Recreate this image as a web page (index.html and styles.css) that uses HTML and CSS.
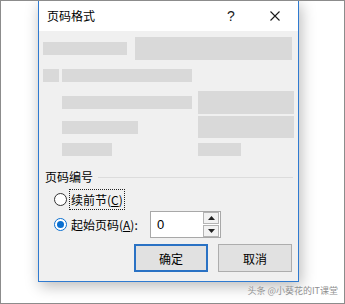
FILE: index.html
```html
<!DOCTYPE html>
<html lang="zh-CN">
<head>
<meta charset="utf-8">
<title>页码格式</title>
<link rel="stylesheet" href="styles.css">
</head>
<body>
<div class="frame">
  <div class="dialog">
    <div class="titlebar">
      <span class="title">页码格式</span>
      <span class="help">?</span>
      <svg class="close" width="10" height="10" viewBox="0 0 10 10"><path d="M0.5 0.5L9.5 9.5M9.5 0.5L0.5 9.5" stroke="#1a1a1a" stroke-width="1.1" fill="none"/></svg>
    </div>
    <div class="content">
      <div class="row row1">
        <div class="blk b1"></div>
        <div class="blk b2"></div>
      </div>
      <div class="row row2">
        <div class="blk b3"></div>
        <div class="blk b4"></div>
      </div>
      <div class="opts">
        <div class="opt optA">
          <div class="lcol"><div class="blk b5"></div></div>
          <div class="blk b6"></div>
        </div>
        <div class="opt optB">
          <div class="lcol"><div class="blk b8"></div></div>
          <div class="blk b7"></div>
        </div>
        <div class="opt optC">
          <div class="lcol"><div class="blk b9"></div></div>
          <div class="blk b10"></div>
        </div>
      </div>
      <div class="group">
        <span class="group-label">页码编号</span>
        <span class="group-line"></span>
      </div>
      <div class="radio-row r1">
        <span class="radio"></span>
        <span class="rlabel focus">续前节(<u>C</u>)</span>
      </div>
      <div class="radio-row r2">
        <span class="radio checked"></span>
        <span class="rlabel start">起始页码(<u>A</u>):</span>
        <div class="spin">
          <span class="spin-val">0</span>
          <div class="spin-btns">
            <span class="sb up"><svg width="7" height="4" viewBox="0 0 7 4"><path d="M3.5 0L7 4H0Z" fill="#222"/></svg></span>
            <span class="sb down"><svg width="7" height="4" viewBox="0 0 7 4"><path d="M0 0H7L3.5 4Z" fill="#222"/></svg></span>
          </div>
        </div>
      </div>
      <div class="buttons">
        <button class="btn ok">确定</button>
        <button class="btn cancel">取消</button>
      </div>
    </div>
  </div>
  <div class="watermark">头条 @小葵花的IT课堂</div>
</div>
</body>
</html>
```
FILE: styles.css
```css
html, body {
  margin: 0;
  padding: 0;
  background: #fff;
}
.frame {
  width: 345px;
  height: 304px;
  box-sizing: border-box;
  border: 1px solid #8c8c8c;
  background: #fff;
  overflow: hidden;
  display: flex;
  flex-direction: column;
  font-family: "Noto Sans CJK SC", "Noto Sans", sans-serif;
  color: #000;
}
.dialog {
  margin-left: 37px;
  width: 261px;
  height: 281px;
  flex: none;
  box-sizing: border-box;
  border: 1px solid #2f7ad0;
  border-top: none;
  background: #f0f0f0;
  box-shadow: 2px 4px 14px rgba(0, 0, 0, 0.28);
  display: flex;
  flex-direction: column;
}
.titlebar {
  height: 30px;
  flex: none;
  background: #fff;
  display: flex;
  align-items: center;
  padding-left: 8px;
}
.title {
  flex: 1;
  font-size: 12px;
  line-height: 16px;
}
.help {
  width: 12px;
  text-align: center;
  font-family: "Liberation Sans", sans-serif;
  font-size: 14px;
  line-height: 16px;
  color: #1a1a1a;
  margin-right: 33px;
}
.close {
  margin-right: 18px;
  display: block;
}
.content {
  padding: 6px 5px 0 4px;
  display: flex;
  flex-direction: column;
}
.blk {
  background: #d9d9d9;
  flex: none;
}
.row {
  display: flex;
  align-items: center;
}
.row1 {
  height: 23px;
  gap: 8px;
}
.b1 { width: 84px; height: 13px; }
.b2 { width: 157px; height: 23px; }
.row2 {
  margin-top: 9px;
  height: 13px;
  gap: 3px;
}
.b3 { width: 16px; height: 13px; }
.b4 { width: 130px; height: 13px; }
.opts {
  margin-top: 9px;
  padding-left: 19px;
  display: flex;
  flex-direction: column;
}
.opt {
  display: flex;
  align-items: center;
}
.lcol {
  width: 136px;
  flex: none;
}
.optA { height: 23px; }
.optB { height: 22px; margin-top: 2px; }
.optC { height: 13px; margin-top: 5px; }
.b5 { width: 130px; height: 13px; }
.b6 { width: 96px; height: 23px; }
.b8 { width: 76px; height: 13px; }
.b7 { width: 96px; height: 22px; }
.b9 { width: 50px; height: 13px; }
.b10 { width: 43px; height: 13px; }
.group {
  margin-top: 13px;
  height: 16px;
  display: flex;
  align-items: center;
}
.group-label {
  margin-left: 2px;
  font-size: 12px;
  line-height: 16px;
}
.group-line {
  flex: 1;
  height: 1px;
  margin-left: 5px;
  background: #dcdcdc;
}
.radio-row {
  display: flex;
  align-items: center;
  padding-left: 11px;
}
.r1 {
  margin-top: 4px;
  height: 21px;
}
.r2 {
  margin-top: 1px;
  height: 27px;
}
.radio {
  width: 13px;
  height: 13px;
  box-sizing: border-box;
  border: 1px solid #333;
  border-radius: 50%;
  background: #fff;
  flex: none;
  position: relative;
}
.radio.checked {
  border-color: #0a6fd0;
}
.radio.checked::after {
  content: "";
  position: absolute;
  left: 2px;
  top: 2px;
  width: 7px;
  height: 7px;
  border-radius: 50%;
  background: #0a6fd0;
}
.rlabel {
  font-size: 12px;
  line-height: 17px;
}
.focus {
  margin-left: 2px;
  border: 1px dotted #222;
  padding: 1px 1px;
}
.start {
  margin-left: 4px;
  width: 79px;
}
.spin {
  width: 71px;
  height: 27px;
  box-sizing: border-box;
  border: 1px solid #a8a8a8;
  background: #fff;
  display: flex;
  align-items: center;
  padding: 0 1px 0 6px;
}
.spin-val {
  flex: 1;
  font-family: "Liberation Sans", sans-serif;
  font-size: 13px;
}
.spin-btns {
  width: 16px;
  height: 25px;
  display: flex;
  flex-direction: column;
  gap: 1px;
  padding: 0;
}
.sb {
  flex: 1;
  box-sizing: border-box;
  border: 1px solid #b4b4b4;
  background: #f2f2f2;
  display: flex;
  align-items: center;
  justify-content: center;
}
.sb svg { display: block; }
.buttons {
  margin-top: 6px;
  margin-right: 1px;
  display: flex;
  justify-content: flex-end;
  gap: 10px;
}
.btn {
  width: 74px;
  height: 28px;
  box-sizing: border-box;
  background: #e1e1e1;
  border: 1px solid #adadad;
  font-family: "Noto Sans CJK SC", sans-serif;
  font-size: 12px;
  color: #000;
  padding: 0;
  margin: 0;
}
.btn.ok {
  border: 2px solid #2a72c4;
}
.watermark {
  margin-top: 3px;
  padding-right: 6px;
  text-align: right;
  font-size: 9px;
  line-height: 12px;
  color: #8f8f8f;
  text-shadow: 0 0 1px #fff;
}
```
